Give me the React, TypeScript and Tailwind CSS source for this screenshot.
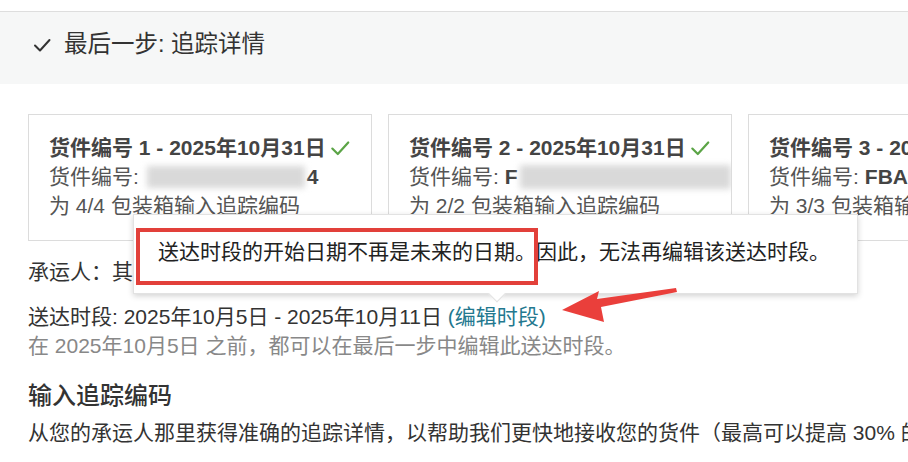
import React from "react";

const font = { fontFamily: '"Liberation Sans", "Noto Sans CJK SC", sans-serif' };

function Check({ className }: { className?: string }) {
  return (
    <svg viewBox="0 0 20 20" className={className} fill="none" stroke="currentColor" strokeWidth="2" strokeLinecap="round" strokeLinejoin="round">
      <path d="M3 10.5 L8 15.5 L17.5 5" />
    </svg>
  );
}

function Card({ n, id, boxes }: { n: number; id: React.ReactNode; boxes: string }) {
  return (
    <div className="w-[344px] h-[127px] shrink-0 border border-[#dcdcdc] pl-5 pt-[18px] text-[21px] leading-[29px] text-[#555] whitespace-nowrap overflow-hidden">
      <div className="flex items-center font-bold text-[#444]">
        <span>货件编号 {n} - 2025年10月31日</span>
        <Check className="w-[22px] h-[22px] ml-[3px] text-[#5ba446]" />
      </div>
      <div className="flex items-center">{id}</div>
      <div>为 {boxes} 包装箱输入追踪编码</div>
    </div>
  );
}

export default function App() {
  return (
    <div className="w-[908px] h-[462px] overflow-hidden bg-white relative" style={font}>
      <div className="h-[11px]" />
      <div className="h-[73px] border-t border-[#dedede] bg-[#f6f7f7] flex items-center pl-8 pb-[7px] text-[#333]">
        <Check className="w-[20px] h-[20px] text-[#333]" />
        <span className="ml-3 text-[23.5px]">最后一步: 追踪详情</span>
      </div>
      <div className="px-7 pt-[30px]">
        <div className="flex gap-4">
          <Card
            n={1}
            boxes="4/4"
            id={
              <>
                <span>货件编号:</span>
                <span className="ml-2 w-[158px] h-[22px] bg-[#d9d9d9] blur-[3px]" />
                <span className="font-bold text-[#444] ml-[2px]">4</span>
              </>
            }
          />
          <Card
            n={2}
            boxes="2/2"
            id={
              <>
                <span>货件编号: </span>
                <span className="ml-[6px] font-bold text-[#444]">F</span>
                <span className="ml-[2px] w-[222px] h-[24px] bg-[#d9d9d9] blur-[3px]" />
              </>
            }
          />
          <Card
            n={3}
            boxes="3/3"
            id={
              <>
                <span>货件编号: </span>
                <span className="ml-[6px] font-bold text-[#444]">FBA</span>
              </>
            }
          />
        </div>
        <div className="mt-4 text-[21px] leading-[29px] text-[#333]">承运人：其他</div>
        <div className="mt-4 text-[21px] leading-[29px] text-[#333]">
          送达时段: 2025年10月5日 - 2025年10月11日 <span className="text-[#23788f]">(编辑时段)</span>
        </div>
        <div className="text-[21px] leading-[30px] text-[#888]">在 2025年10月5日 之前，都可以在最后一步中编辑此送达时段。</div>
        <div className="mt-[19px] text-[24px] leading-[32px] text-[#333] font-medium">输入追踪编码</div>
        <div className="mt-[6px] text-[21px] leading-[29px] text-[#333] whitespace-nowrap">
          从您的承运人那里获得准确的追踪详情，以帮助我们更快地接收您的货件（最高可以提高 30% 的
        </div>
      </div>

      {/* tooltip */}
      <div className="absolute left-[133px] top-[214px] w-[725px] h-[80px] bg-white border border-[#e2e2e2] shadow-[0_2px_6px_rgba(0,0,0,0.18)]">
        <div className="pl-[24px] pt-[22px] text-[21px] leading-[30px] text-[#222] whitespace-nowrap">
          送达时段的开始日期不再是未来的日期。因此，无法再编辑该送达时段。
        </div>
        <div className="absolute left-[2px] top-[13px] w-[402px] h-[57px] border-[4px] border-[#e2403a]" />
        <div className="absolute left-[357px] bottom-[-7px] w-[12px] h-[12px] bg-white border-r border-b border-[#e2e2e2] rotate-45" />
      </div>

      {/* red annotation arrow */}
      <svg className="absolute left-0 top-0" width="908" height="462" viewBox="0 0 908 462">
        <polygon points="562,310 599,291 597,299 676,288 677,292 601,307 604,322" fill="#ea3f3b" />
      </svg>
    </div>
  );
}
